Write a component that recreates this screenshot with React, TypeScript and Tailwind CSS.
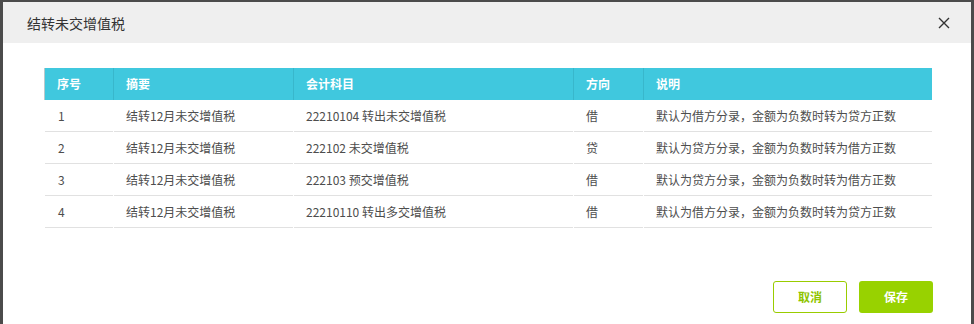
import React from "react";

const rows = [
  ["1", "结转12月未交增值税", "22210104 转出未交增值税", "借", "默认为借方分录，金额为负数时转为贷方正数"],
  ["2", "结转12月未交增值税", "222102 未交增值税", "贷", "默认为贷方分录，金额为负数时转为借方正数"],
  ["3", "结转12月未交增值税", "222103 预交增值税", "借", "默认为贷方分录，金额为负数时转为借方正数"],
  ["4", "结转12月未交增值税", "22210110 转出多交增值税", "借", "默认为借方分录，金额为负数时转为贷方正数"],
];

const headers = ["序号", "摘要", "会计科目", "方向", "说明"];
const cols = "grid-cols-[68px_179px_279px_69px_1fr]";

export default function App() {
  return (
    <div
      className="w-[974px] h-[324px] overflow-hidden bg-[#4b4b4b] pl-[3px] pr-[3px] pt-[2px]"
      style={{ fontFamily: '"Noto Sans CJK SC", "Noto Sans", sans-serif' }}
    >
      <div className="w-[968px] h-[400px] bg-white flex flex-col">
        <div className="h-[41px] bg-[#efefef] flex items-center justify-between pl-[24px] pr-[21px]">
          <span className="text-[14px] text-[#333] leading-none">结转未交增值税</span>
          <svg width="12" height="12" viewBox="0 0 12 12" className="text-[#333]">
            <path d="M1 1 L11 11 M11 1 L1 11" stroke="currentColor" strokeWidth="1.4" />
          </svg>
        </div>
        <div className="pl-[41px] pr-[39px] pt-[25px]">
          <div className={`grid ${cols} gap-x-px bg-[#38b7cc] h-[32px] border-l border-[#b9c9cc]`}>
            {headers.map((h) => (
              <div key={h} className="bg-[#40c8de] flex items-center pl-[12px] text-[12px] font-bold text-white">
                {h}
              </div>
            ))}
          </div>
          {rows.map((r, i) => (
            <div key={i} className={`grid ${cols} gap-x-px bg-white border-l border-white`}>
              {r.map((c, j) => (
                <div
                  key={j}
                  className={`h-[32px] flex items-center border-b border-[#e1e1e1] text-[12px] text-[#4d4d4d] ${j === 0 ? "pl-[13px]" : "pl-[12px]"}`}
                >
                  {c}
                </div>
              ))}
            </div>
          ))}
          <div className="flex justify-end gap-[12px] mt-[53px] mr-[-1px]">
            <button className="w-[74px] h-[32px] rounded-[3px] border border-[#99cc00] bg-white text-[#8fc400] text-[12px] font-bold">
              取消
            </button>
            <button className="w-[74px] h-[32px] rounded-[3px] bg-[#98d200] text-white text-[12px] font-bold">
              保存
            </button>
          </div>
        </div>
      </div>
    </div>
  );
}
